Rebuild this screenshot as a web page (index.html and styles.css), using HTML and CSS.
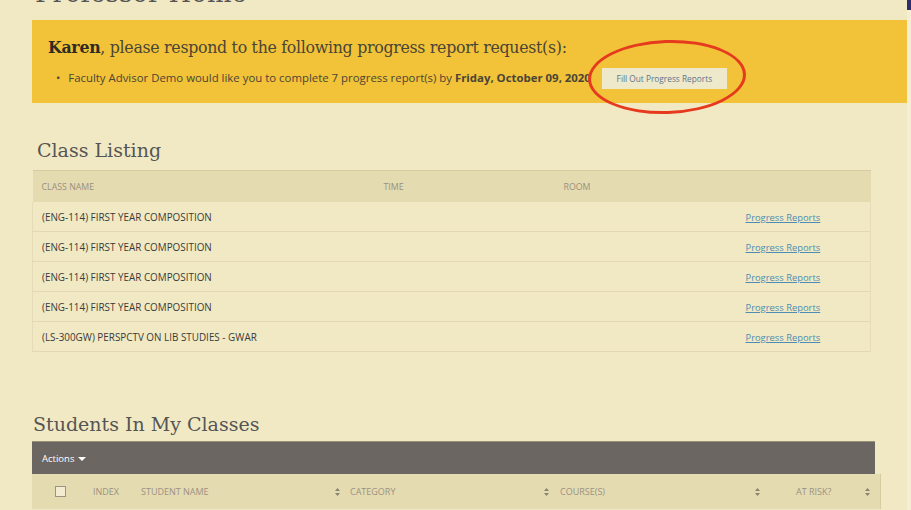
FILE: index.html
```html
<!DOCTYPE html>
<html lang="en">
<head>
  <meta charset="UTF-8" />
  <title>Professor Home</title>
  <link rel="stylesheet" href="styles.css">
</head>
<body>
  <div class="page">
    <main class="main">
      <h1 class="page-title">Professor Home</h1>

      <div class="alert">
        <p class="alert-lead"><b>Karen</b>, please respond to the following progress report request(s):</p>
        <ul class="alert-list">
          <li>
            Faculty Advisor Demo would like you to complete 7 progress report(s) by <b>Friday, October 09, 2020</b>
            <span class="fill-wrap">
              <button class="fill-btn">Fill Out Progress Reports</button>
              <span class="circle"></span>
            </span>
          </li>
        </ul>
      </div>

      <h2 class="section-title">Class Listing</h2>
      <table class="classes">
        <thead>
          <tr>
            <th class="c-name">Class Name</th>
            <th class="c-time">Time</th>
            <th class="c-room">Room</th>
            <th></th>
          </tr>
        </thead>
        <tbody>
          <tr><td>(ENG-114) FIRST YEAR COMPOSITION</td><td></td><td></td><td><a href="#">Progress Reports</a></td></tr>
          <tr><td>(ENG-114) FIRST YEAR COMPOSITION</td><td></td><td></td><td><a href="#">Progress Reports</a></td></tr>
          <tr><td>(ENG-114) FIRST YEAR COMPOSITION</td><td></td><td></td><td><a href="#">Progress Reports</a></td></tr>
          <tr><td>(ENG-114) FIRST YEAR COMPOSITION</td><td></td><td></td><td><a href="#">Progress Reports</a></td></tr>
          <tr><td>(LS-300GW) PERSPCTV ON LIB STUDIES - GWAR</td><td></td><td></td><td><a href="#">Progress Reports</a></td></tr>
        </tbody>
      </table>

      <h2 class="section-title students-title">Students In My Classes</h2>
      <div class="actions-bar">
        <span class="actions">Actions <span class="caret"></span></span>
      </div>
      <div class="students-head">
        <span class="chk"></span>
        <span>Index</span>
        <span>Student Name</span>
        <span class="sort"><svg width="5" height="8" viewBox="0 0 5 8"><path d="M2.5 0L5 3H0z M2.5 8L5 5H0z" fill="#8a8470"/></svg></span>
        <span>Category</span>
        <span class="sort"><svg width="5" height="8" viewBox="0 0 5 8"><path d="M2.5 0L5 3H0z M2.5 8L5 5H0z" fill="#8a8470"/></svg></span>
        <span>Course(s)</span>
        <span class="sort"><svg width="5" height="8" viewBox="0 0 5 8"><path d="M2.5 0L5 3H0z M2.5 8L5 5H0z" fill="#8a8470"/></svg></span>
        <span class="risk">At Risk?</span>
        <span class="sort"><svg width="5" height="8" viewBox="0 0 5 8"><path d="M2.5 0L5 3H0z M2.5 8L5 5H0z" fill="#8a8470"/></svg></span>
      </div>
    </main>
    <div class="edge"></div>
  </div>
</body>
</html>
```

FILE: styles.css
```css
body {
  margin: 0;
  background: #f1e9c3;
  color: #333;
  font-family: 'Open Sans', sans-serif;
  overflow: hidden;
}

.page {
  display: flex;
  height: 510px;
}

.main {
  flex: 1;
  padding-left: 32px;
}

.edge {
  width: 4px;
  background: #f4eed2;
  border-top: 10px solid #2c2f6e;
  box-sizing: border-box;
}

.page-title {
  font-family: 'DejaVu Serif', serif;
  font-weight: normal;
  font-size: 26px;
  color: #555;
  line-height: 30px;
  margin: -22px 0 12px 3px;
}

/* yellow request banner */
.alert {
  background: #f2c238;
  padding: 18px 16px 0;
  height: 65px;
}

.alert-lead {
  font-family: 'DejaVu Serif', serif;
  font-size: 15.8px;
  color: #4a4536;
  margin: 0 0 11px;
  letter-spacing: -0.3px;
}

.alert-lead b {
  color: #2e2b22;
}

.alert-list {
  margin: 0;
  padding-left: 8px;
  font-size: 11.4px;
  color: #4a4536;
  list-style: none;
}

.alert-list li::before {
  content: "•";
  margin-right: 5px;
}

.fill-wrap {
  position: relative;
  display: inline-block;
  margin-left: 8px;
}

.fill-btn {
  font-family: 'Open Sans', sans-serif;
  font-size: 8.3px;
  color: #5b7590;
  background: #efe9cb;
  border: none;
  padding: 0;
  width: 125px;
  height: 21px;
}

.circle {
  position: absolute;
  left: -14px;
  top: -28px;
  width: 152px;
  height: 68px;
  border: 3px solid #e63a1f;
  border-radius: 50%;
  transform: rotate(-2deg);
}

.section-title {
  font-family: 'DejaVu Serif', serif;
  font-weight: normal;
  font-size: 19px;
  color: #555;
  margin: 36px 0 9px 5px;
}

/* class listing */
.classes {
  width: 839px;
  border-collapse: collapse;
  font-size: 9.9px;
}

.classes th {
  background: #e5dbb1;
  color: #999080;
  font-weight: normal;
  text-transform: uppercase;
  text-align: left;
  height: 31px;
  padding: 0 9px;
  border-top: 1px solid #d6cc9f;
  font-size: 8.8px;
}

.c-name { width: 324px; }
.c-time { width: 162px; }
.c-room { width: 164px; }

.classes td {
  height: 29px;
  padding: 0 9px;
  border-bottom: 1px solid #e2d9b2;
  color: #3a3a3a;
}

.classes tbody tr {
  border-left: 1px solid #e6ddb8;
  border-right: 1px solid #e6ddb8;
}

.classes a {
  color: #4d8db5;
  text-decoration: underline;
  font-size: 9.4px;
}

/* students */
.students-title {
  margin-top: 61px;
  margin-left: 1px;
  margin-bottom: 6px;
}

.actions-bar {
  width: 843px;
  height: 33px;
  background: #6b6662;
  display: flex;
  align-items: center;
  border-top: 1px solid #9a9074;
  box-sizing: border-box;
}

.actions {
  color: #fff;
  font-size: 9.5px;
  margin-left: 10px;
}

.caret {
  display: inline-block;
  border-left: 4px solid transparent;
  border-right: 4px solid transparent;
  border-top: 4px solid #fff;
  vertical-align: middle;
  margin-left: 1px;
}

.students-head {
  width: 849px;
  height: 35px;
  background: #e5dbb1;
  border-right: 1px solid #d6cc9f;
  box-sizing: border-box;
  display: grid;
  grid-template-columns: 38px 48px 194px 15px 194px 16px 195px 41px 69px 16px;
  align-items: center;
  padding-left: 23px;
  font-size: 9px;
  color: #9a9282;
  text-transform: uppercase;
}

.chk {
  width: 9px;
  height: 9px;
  border: 1px solid #9a9282;
  background: #f3ecd0;
}

.sort svg {
  display: block;
}
```
